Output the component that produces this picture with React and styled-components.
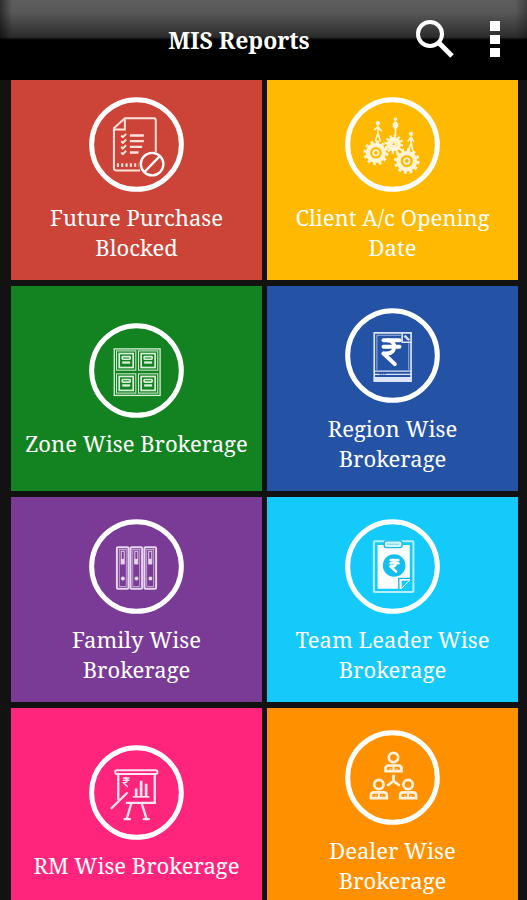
import React from "react";
import styled, { createGlobalStyle } from "styled-components";
import { IndianRupee } from "lucide-react";

const BlockedIcon = () => (
  <IconSvg viewBox="24 18 286 286">
    <Ring cx="167" cy="161" r="135" />
    <g stroke="#fbe3dc" strokeWidth="6">
      <path d="M178 239H106Q99 239 99 232V112L132 82H219Q225 82 225 88V184" />
      <path d="M132 82V116H99" />
      <path d="M147 134H189M147 151H189M147 168H184M147 185H173" strokeWidth="7" />
      <path d="M121 134l5 5 10-10M121 151l5 5 10-10M121 168l5 5 10-10M121 185l5 5 10-10" strokeWidth="6" />
      <path d="M108 223H174" strokeWidth="11" strokeDasharray="6 7" />
    </g>
    <circle cx="214" cy="220" r="34" fill="#cb4437" strokeWidth="7" />
    <path d="M191 244L237 196" strokeWidth="7" />
  </IconSvg>
);

const Gear = ({ cx, cy, r }) => (
  <g>
    <circle cx={cx} cy={cy} r={r} strokeWidth="9" pathLength="144" strokeDasharray="6 6" />
    <circle cx={cx} cy={cy} r={r - 9} strokeWidth="13" />
    <circle cx={cx} cy={cy} r={r / 4} strokeWidth="5" />
  </g>
);

const GearsIcon = () => (
  <IconSvg viewBox="22 17 286 286">
    <Ring cx="165" cy="160" r="135" />
    <g stroke="#fff6d8">
      <Gear cx={115} cy={185} r={33} />
      <Gear cx={169} cy={159} r={24} />
      <Gear cx={208} cy={210} r={34} />
      <g strokeWidth="5">
        <circle cx="121" cy="96" r="4" fill="#fff6d8" />
        <path d="M121 103V126L113 150M121 126L129 151M110 116L121 107L133 120" />
        <circle cx="174" cy="84" r="3" fill="#fff6d8" />
        <path d="M174 91V134M168 96V108M180 96V108" />
        <path d="M174 92V112" strokeWidth="10" />
        <circle cx="221" cy="128" r="4" fill="#fff6d8" />
        <path d="M221 136V156L213 177M221 154L226 178M211 151L221 138L229 152" />
      </g>
    </g>
  </IconSvg>
);

const Drawer = ({ x, y }) => (
  <g>
    <rect x={x} y={y} width="58" height="58" strokeWidth="3" />
    <rect x={x + 8} y={y + 8} width="42" height="42" strokeWidth="5" />
    <rect x={x + 17} y={y + 17} width="24" height="8" rx="2" strokeWidth="5" />
    <path d={`M${x + 17} ${y + 35}h24`} strokeWidth="7" />
  </g>
);

const DrawersIcon = () => (
  <IconSvg viewBox="24 23 286 286">
    <Ring cx="167" cy="166" r="135" />
    <g stroke="#d9efd9">
      <rect x="100" y="101" width="138" height="140" strokeWidth="4" />
      <Drawer x={107} y={107} />
      <Drawer x={173} y={107} />
      <Drawer x={107} y={176} />
      <Drawer x={173} y={176} />
    </g>
  </IconSvg>
);

const RupeeBookIcon = () => (
  <IconSvg viewBox="22 22 286 286">
    <Ring cx="165" cy="165" r="135" />
    <g stroke="#dbe5f5">
      <path d="M193 97H110V242H221V125" strokeWidth="5" />
      <path d="M118 208V104H190M214 128V208" strokeWidth="2" />
      <path d="M110 212H221M110 222H221" strokeWidth="4" />
      <path d="M110 236H221" strokeWidth="12" />
      <path d="M126 220H146" stroke="#2453a6" strokeWidth="5" strokeDasharray="4 3" />
      <path d="M194 97H221V125H194Z" strokeWidth="5" />
      <path d="M201 105L215 119" strokeWidth="7" />
    </g>
    <IndianRupee x="114" y="106" width="96" height="98" strokeWidth={3} color="#fff" />
  </IconSvg>
);

const Binder = ({ x }) => (
  <g>
    <rect x={x} y="105" width="35" height="125" rx="3" strokeWidth="6" />
    <rect x={x + 7} y="112" width="21" height="111" strokeWidth="2" />
    <rect x={x + 13} y="117" width="9" height="38" strokeWidth="3" />
    <path d={`M${x + 17} 140v16`} strokeWidth="10" />
    <circle cx={x + 18} cy="199" r="4" fill="#fff" strokeWidth="4" />
  </g>
);

const BindersIcon = () => (
  <IconSvg viewBox="24 20 286 286">
    <Ring cx="167" cy="163" r="135" />
    <g stroke="#e6d6ee">
      <Binder x={108} />
      <Binder x={149} />
      <Binder x={191} />
    </g>
  </IconSvg>
);

const ClipboardIcon = () => (
  <IconSvg viewBox="22 20 286 286">
    <Ring cx="165" cy="163" r="135" />
    <rect x="109" y="87" width="119" height="153" rx="3" stroke="#b5effc" strokeWidth="6" />
    <path d="M120 98H217V204L191 230H120Z" fill="#fff" stroke="none" />
    <path d="M217 204L191 230V204Z" fill="#13cafb" stroke="#fff" strokeWidth="3" />
    <path d="M184 231V199H218" stroke="#13b4dd" strokeWidth="4" />
    <rect x="140" y="86" width="54" height="20" rx="7" fill="#d5f6fd" stroke="#13b9e5" strokeWidth="4" />
    <path d="M150 96H185" stroke="#7fdcf3" strokeWidth="4" />
    <circle cx="170" cy="160" r="34" fill="#13bfee" stroke="none" />
    <IndianRupee x="148" y="138" width="46" height="46" strokeWidth={4} color="#fff" />
  </IconSvg>
);

const BoardIcon = () => (
  <IconSvg viewBox="24 22 286 286">
    <Ring cx="167" cy="165" r="135" />
    <g stroke="#ffe3ef" strokeWidth="7">
      <rect x="103" y="98" width="127" height="11" rx="5" strokeWidth="6" />
      <path d="M112 110V187M135 196H222V110" />
      <path d="M90 214L140 165" />
      <path d="M151 199L138 243M183 199L197 243" />
      <path d="M128 245H150M186 245H207" />
      <path d="M156 178H206" strokeWidth="5" />
      <path d="M166 176V153M181 176V130M196 176V139" strokeWidth="8" />
    </g>
    <IndianRupee x="119" y="116" width="34" height="36" strokeWidth={3} color="#ffe3ef" />
  </IconSvg>
);

const Person = ({ x, y }) => (
  <g strokeWidth="8">
    <circle cx={x} cy={y} r="14" />
    <path d={`M${x - 24} ${y + 41}v-8q0-9 10-9h28q10 0 10 9v8z`} />
    <path d={`M${x} ${y + 26}v14`} strokeWidth="6" />
    <path d={`M${x - 12} ${y + 34}h6M${x + 6} ${y + 34}h6`} stroke="#ffc680" strokeWidth="4" />
  </g>
);

const TeamIcon = () => (
  <IconSvg viewBox="22 20 286 286">
    <Ring cx="165" cy="163" r="135" />
    <g stroke="#fff3e0">
      <Person x={168} y={103} />
      <Person x={124} y={184} />
      <Person x={212} y={184} />
      <path d="M168 155V174L149 188M168 174L187 188" strokeWidth="8" />
    </g>
  </IconSvg>
);

const reports = [
  { label: "Future Purchase Blocked", color: "#cb4437", icon: BlockedIcon },
  { label: "Client A/c Opening Date", color: "#ffb900", icon: GearsIcon },
  { label: "Zone Wise Brokerage", color: "#138221", icon: DrawersIcon },
  { label: "Region Wise Brokerage", color: "#2453a6", icon: RupeeBookIcon },
  { label: "Family Wise Brokerage", color: "#7a3b96", icon: BindersIcon },
  { label: "Team Leader Wise Brokerage", color: "#13cafb", icon: ClipboardIcon },
  { label: "RM Wise Brokerage", color: "#ff257c", icon: BoardIcon },
  { label: "Dealer Wise Brokerage", color: "#ff9100", icon: TeamIcon },
];

const App = () => {
  return (
    <Screen>
      <GlobalStyle />
      <Header>
        <Title>MIS Reports</Title>
        <IconButton aria-label="Search">
          <svg width="40" height="40" viewBox="0 0 40 40" fill="none" stroke="#fff">
            <circle cx="15" cy="15" r="12" strokeWidth="4" />
            <path d="M23 23L37 37" strokeWidth="5" />
          </svg>
        </IconButton>
        <IconButton aria-label="More options">
          <svg width="40" height="40" viewBox="0 0 40 40" fill="#fff">
            <path d="M15 2h10v10h-10zM15 16h10v9h-10zM15 29h10v9h-10z" />
          </svg>
        </IconButton>
      </Header>
      <Content>
        <Grid>
          {reports.map(({ label, color, icon: Icon }) => (
            <Tile key={label} $color={color}>
              <Icon />
              <Label>{label}</Label>
            </Tile>
          ))}
        </Grid>
      </Content>
    </Screen>
  );
};

const GlobalStyle = createGlobalStyle`
  * {
    box-sizing: border-box;
  }

  body {
    margin: 0;
    background-color: #121212;
    font-family: "Noto Serif", "Droid Serif", "DejaVu Serif Condensed", "DejaVu Serif", serif;
  }
`;

const Screen = styled.div`
  display: flex;
  flex-direction: column;
  height: 100vh;
`;

const Header = styled.header`
  display: flex;
  align-items: center;
  gap: 20px;
  flex-shrink: 0;
  height: 80px;
  padding: 0 12px 2px 83px;
  background:
    linear-gradient(to right, rgba(0, 0, 0, 0.5), transparent 12px, transparent calc(100% - 12px), rgba(0, 0, 0, 0.3)),
    linear-gradient(#5e5e5e, #585858 12px, #2c2c2c 37px, #000 40px);
`;

const Title = styled.h1`
  flex: 1;
  margin: 0;
  padding-top: 2px;
  color: #fff;
  font-size: 23px;
  font-weight: bold;
  line-height: 30px;
  text-align: center;
`;

const IconButton = styled.button`
  display: flex;
  padding: 0;
  border: none;
  background: none;
  cursor: pointer;
`;

const Content = styled.main`
  flex: 1;
  min-height: 0;
  overflow-y: auto;
  scrollbar-width: none;
`;

const Grid = styled.div`
  display: grid;
  grid-template-columns: 1fr 1fr;
  grid-auto-rows: 205px;
  gap: 6px 5px;
  margin-top: -5px;
  padding: 0 9px 6px 11px;
`;

const Tile = styled.button`
  display: flex;
  flex-direction: column;
  align-items: center;
  justify-content: center;
  gap: 10px;
  padding: 3px 12px 0;
  border: none;
  background-color: ${(props) => props.$color};
  color: #fff;
  font-family: inherit;
  cursor: pointer;
`;

const Label = styled.span`
  max-width: 228px;
  font-size: 22px;
  line-height: 30px;
  text-align: center;
`;

const IconSvg = styled.svg`
  width: 95px;
  height: 95px;
  flex-shrink: 0;
  fill: none;
  stroke: #fff;
`;

const Ring = styled.circle`
  stroke: #fff;
  stroke-width: 15px;
`;

export default App;
